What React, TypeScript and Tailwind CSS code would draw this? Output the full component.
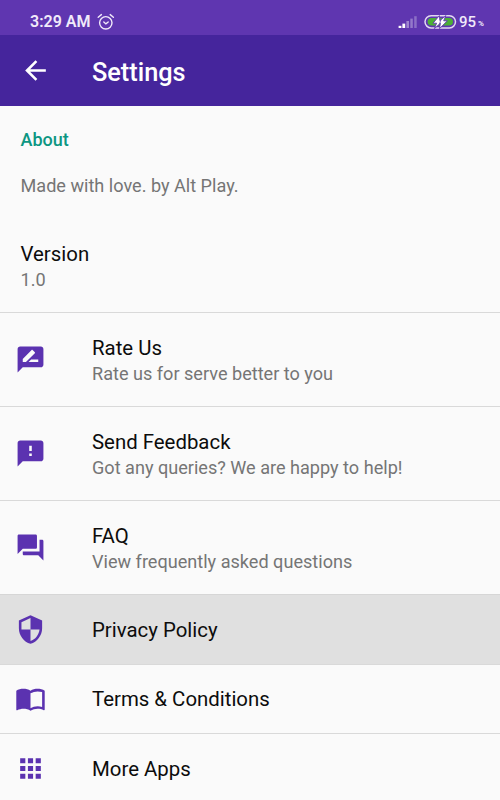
import React from 'react';
import type { IconType } from 'react-icons';
import {
  MdApps,
  MdArrowBack,
  MdFeedback,
  MdImportContacts,
  MdQuestionAnswer,
  MdRateReview,
  MdSecurity
} from 'react-icons/md';

interface SettingsItem {
  id: string;
  title: string;
  summary?: string;
  icon: IconType;
}

const items: SettingsItem[] = [
  { id: 'rate', title: 'Rate Us', summary: 'Rate us for serve better to you', icon: MdRateReview },
  { id: 'feedback', title: 'Send Feedback', summary: 'Got any queries? We are happy to help!', icon: MdFeedback },
  { id: 'faq', title: 'FAQ', summary: 'View frequently asked questions', icon: MdQuestionAnswer },
  { id: 'privacy', title: 'Privacy Policy', icon: MdSecurity },
  { id: 'terms', title: 'Terms & Conditions', icon: MdImportContacts },
  { id: 'apps', title: 'More Apps', icon: MdApps }
];

const AlarmIcon = () => (
  <svg width="18" height="18" viewBox="0 0 18 18" fill="none" stroke="currentColor" strokeWidth="1.4" strokeLinecap="round">
    <circle cx="8.8" cy="9.8" r="6.2" />
    <path d="M1.2 4.2 4.4 1.6M16.4 4.2 13.2 1.6M6.8 9 8.9 10.9 11.2 9" />
  </svg>
);

const SignalIcon = () => (
  <svg width="20" height="14" viewBox="0 0 20 14" fill="#fff">
    <rect x="0.6" y="10.8" width="2.8" height="2.2" />
    <rect x="4.4" y="8.6" width="2.8" height="4.4" />
    <rect x="8.4" y="6" width="2.6" height="7" opacity=".4" />
    <rect x="12.3" y="3.6" width="2.5" height="9.4" opacity=".33" />
    <rect x="16.2" y="1.2" width="2.5" height="11.8" opacity=".28" />
  </svg>
);

const BatteryIcon = () => (
  <svg width="33" height="16" viewBox="0 0 33 16">
    <rect x="1" y="1.7" width="30.5" height="12.2" rx="6.1" fill="none" stroke="#e2d8f2" strokeWidth="1.5" />
    <rect x="3.6" y="4" width="25.4" height="7.6" rx="3.8" fill="#4caf36" />
    <path
      d="M15.4 1.6 9 9.2h3.6L10.4 14.6l6-5.4-.9 5.4L23.4 6.8h-3.7l2.2-5.2-6 5z"
      fill="#fff"
      stroke="#5f36b0"
      strokeWidth=".9"
    />
    <path d="m17 5.6-1.6 4.6" stroke="#5f36b0" strokeWidth=".7" />
  </svg>
);

const StatusBar = () => (
  <div className="flex h-[35px] shrink-0 items-center bg-[#5f36b0] pt-2 pl-[30px] pr-4 text-[#f1eafa]">
    <span className="w-[61px] whitespace-nowrap text-[16px] leading-5 font-semibold">3:29 AM</span>
    <span className="ml-1.5">
      <AlarmIcon />
    </span>
    <div className="ml-auto flex items-center">
      <SignalIcon />
      <span className="ml-[6px]">
        <BatteryIcon />
      </span>
      <span className="ml-[2px] text-[15px] leading-5 font-medium">95</span>
      <span className="ml-[2px] pt-1 text-[8px] font-bold">%</span>
    </div>
  </div>
);

const Row: React.FC<{ item: SettingsItem; pressed: boolean }> = ({ item, pressed }) => (
  <li
    className={`flex shrink-0 items-center border-t pl-[15px] ${item.summary ? 'h-[94px]' : 'h-[69.5px]'} ${
      pressed ? 'border-[#d6d6d6] bg-[#e0e0e0]' : 'border-[#d9d9d9]'
    }`}
  >
    <item.icon className="h-[31px] w-[31px] shrink-0 text-[#5b32b0]" />
    <div className={`ml-[46px] whitespace-nowrap ${item.summary ? 'pt-0.5' : 'pt-px'}`}>
      <div className="text-[20.4px] leading-[26px] text-[#0c0c0c]">{item.title}</div>
      {item.summary && <div className="text-[18.1px] leading-[26px] text-[#757575]">{item.summary}</div>}
    </div>
  </li>
);

export default function App() {
  return (
    <div className="flex h-[800px] w-[500px] flex-col overflow-hidden bg-[#fafafa] font-['Roboto',sans-serif]">
      <StatusBar />

      {/* Toolbar */}
      <header className="flex h-[71px] shrink-0 items-center bg-[#45259c] pl-[20px] text-white">
        <MdArrowBack className="h-[31px] w-[31px]" />
        <h1 className="ml-[41px] pt-1 text-[25.3px] leading-8 font-medium">Settings</h1>
      </header>

      {/* About */}
      <section className="h-[206px] shrink-0 pt-[21px] pl-[20.5px]">
        <h2 className="text-[18px] leading-[26px] font-medium text-[#0c9682]">About</h2>
        <p className="mt-5 text-[18.1px] leading-[26px] text-[#757575]">Made with love. by Alt Play.</p>
        <div className="mt-[42px]">
          <div className="text-[20.4px] leading-[26px] text-[#0c0c0c]">Version</div>
          <div className="text-[18.1px] leading-[26px] text-[#757575]">1.0</div>
        </div>
      </section>

      <ul>
        {items.map(item => (
          <Row key={item.id} item={item} pressed={item.id === 'privacy'} />
        ))}
      </ul>
    </div>
  );
}
